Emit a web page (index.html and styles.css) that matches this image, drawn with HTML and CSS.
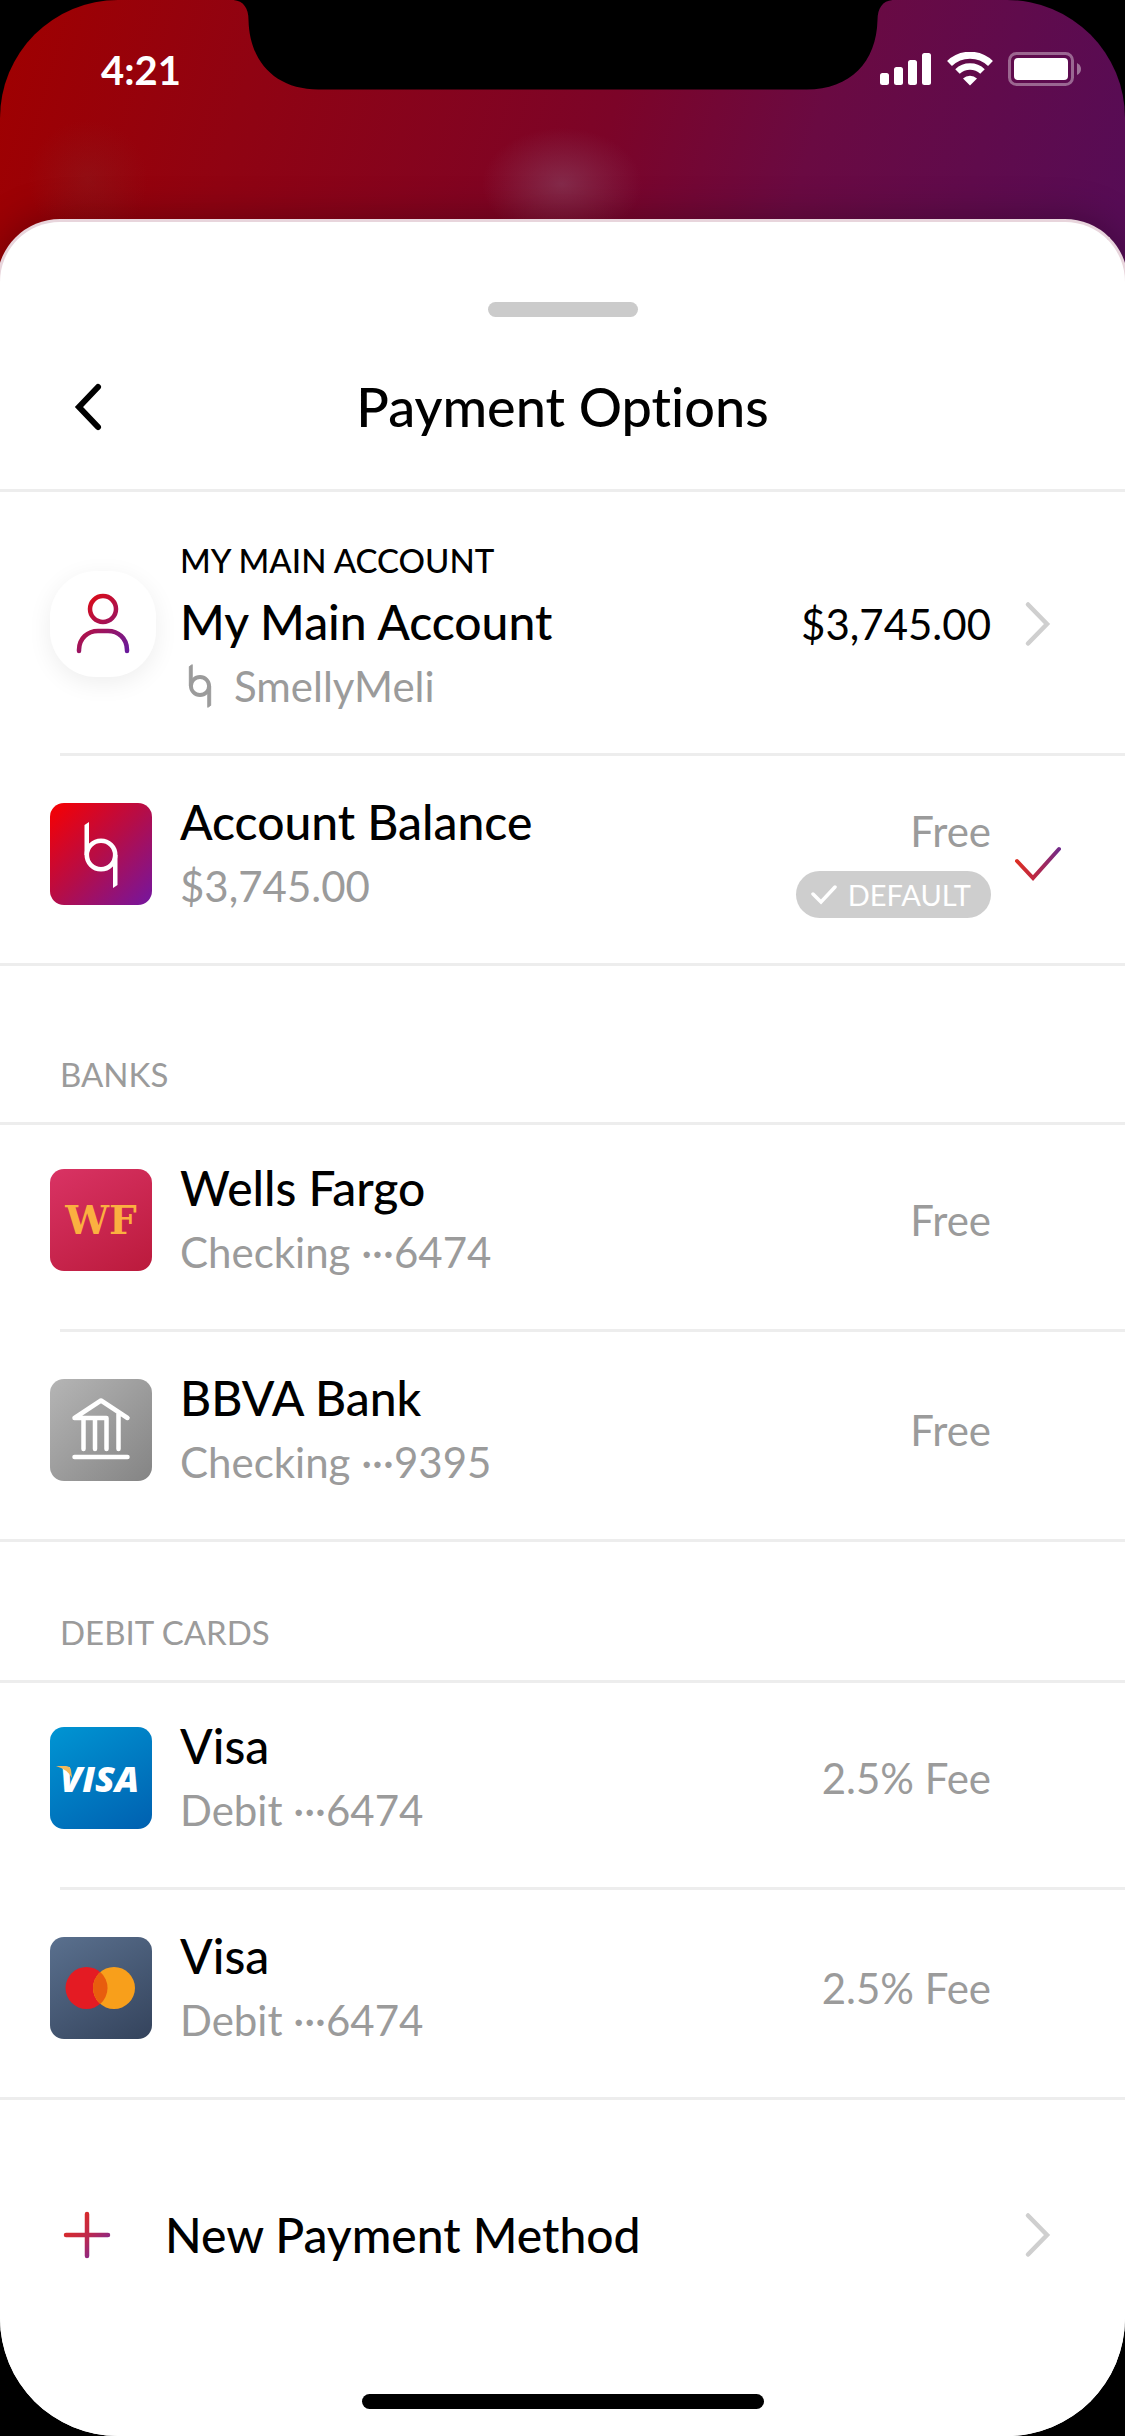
FILE: index.html
```html
<!DOCTYPE html>
<html lang="en">
<head>
<meta charset="utf-8">
<meta name="viewport" content="width=device-width, initial-scale=1">
<title>Payment Options</title>
<link rel="stylesheet" href="styles.css">
</head>
<body>
<svg class="defs" width="0" height="0" aria-hidden="true">
  <defs>
    <linearGradient id="brand" gradientUnits="userSpaceOnUse" x1="8" y1="4" x2="52" y2="60">
      <stop offset="0" stop-color="#e60a0a"/><stop offset="1" stop-color="#6a1a9a"/>
    </linearGradient>
    <linearGradient id="brand-check" gradientUnits="userSpaceOnUse" x1="0" y1="0" x2="48" y2="0">
      <stop offset="0" stop-color="#e03020"/><stop offset=".4" stop-color="#c02840"/><stop offset="1" stop-color="#6a2a90"/>
    </linearGradient>
    <linearGradient id="brand-plus" gradientUnits="userSpaceOnUse" x1="8" y1="8" x2="42" y2="42">
      <stop offset="0" stop-color="#e02c20"/><stop offset=".5" stop-color="#c0284a"/><stop offset="1" stop-color="#7c2898"/>
    </linearGradient>
    <symbol id="chevron" viewBox="0 0 28 48">
      <path d="M4 4.500 L23 24 L4 43.500" fill="none" stroke="#cfcfcf" stroke-width="4.500" stroke-linecap="round"/>
    </symbol>
  </defs>
</svg>
<div class="screen">
  <header class="status">
    <svg class="notch" width="659" height="90" viewBox="0 0 659 90" aria-hidden="true">
      <path d="M0 0 C10 1 15 8 15 20 C16 62 42 89.500 85 89.500 H573 C617 89.500 643 62 644 20 C644 8 649 1 659 0Z" fill="#000"/>
    </svg>
    <time class="clock">4:21</time>
    <div class="indicators">
      <svg width="52" height="34" viewBox="0 0 52 34" aria-label="Signal" fill="#fff">
        <rect x="0" y="21" width="9" height="12" rx="2.500"/><rect x="14" y="15" width="9" height="18" rx="2.500"/>
        <rect x="28" y="8" width="9" height="25" rx="2.500"/><rect x="42" y="1" width="9" height="32" rx="2.500"/>
      </svg>
      <svg width="46" height="34" viewBox="0 0 46 34" aria-label="Wi-Fi" fill="none" stroke="#fff">
        <path d="M2.500 11.500 A29.500 29.500 0 0 1 43.500 11.500" stroke-width="7"/>
        <path d="M10.500 19.500 A18 18 0 0 1 35.500 19.500" stroke-width="6.500"/>
        <path d="M16 26.500 A10 10 0 0 1 30 26.500 L23 33.500Z" fill="#fff" stroke="none"/>
      </svg>
      <svg width="74" height="34" viewBox="0 0 74 34" aria-label="Battery">
        <rect x="1.500" y="1.500" width="63" height="31" rx="7" fill="none" stroke="#fff" stroke-opacity=".38" stroke-width="3"/>
        <rect x="6" y="6" width="54" height="22" rx="4" fill="#fff"/>
        <path d="M69 11 Q73 13 73 17 Q73 21 69 23Z" fill="#fff" fill-opacity=".42"/>
      </svg>
    </div>
  </header>

  <main class="sheet">
    <div class="grabber"></div>
    <div class="titlebar">
      <button class="back" type="button" aria-label="Back">
        <svg width="32" height="50" viewBox="0 0 32 50"><path d="M26 5 L7 25 L26 45" fill="none" stroke="#000" stroke-width="6" stroke-linecap="round"/></svg>
      </button>
      <h1 class="title">Payment Options</h1>
    </div>

    <ul class="list">
      <li class="item">
        <button class="row row-tall" type="button">
          <span class="tile avatar">
            <svg width="60" height="66" viewBox="0 0 60 66" fill="none" stroke="url(#brand)" stroke-width="4.500" stroke-linecap="round">
              <circle cx="30" cy="18" r="13"/><path d="M6 60 V59 C6 47 15 40 25 40 H35 C45 40 54 47 54 59 V60"/>
            </svg>
          </span>
          <span class="text">
            <span class="overline">MY MAIN ACCOUNT</span>
            <span class="name">My Main Account</span>
            <span class="detail handle">
              <svg width="24" height="44" viewBox="33 18 36 68" fill="#9b9b9b" stroke="#9b9b9b" aria-hidden="true">
                <path d="M34.500 22 L39 19 V52 H34.500Z M63 52 H67.500 V82 L63 85Z" stroke-width="1.500"/>
                <circle cx="51" cy="52" r="14" fill="none" stroke-width="6"/>
              </svg>
              SmellyMeli
            </span>
          </span>
          <span class="value strong">$3,745.00</span>
          <span class="accessory"><svg width="28" height="48"><use href="#chevron"/></svg></span>
        </button>
      </li>
      <li class="item">
        <button class="row" type="button" aria-pressed="true">
          <span class="tile balance">
            <svg width="102" height="102" viewBox="0 0 102 102" fill="#fff">
              <path d="M34.500 22 L39 19 V52 H34.500Z M63 52 H67.500 V82 L63 85Z"/>
              <circle cx="51" cy="52" r="14.200" fill="none" stroke="#fff" stroke-width="4.600"/>
            </svg>
          </span>
          <span class="text"><span class="name">Account Balance</span><span class="detail">$3,745.00</span></span>
          <span class="value stacked">
            Free
            <span class="badge">
              <svg width="28" height="20" viewBox="0 0 28 20"><path d="M3 9 L11 17 L25 2" fill="none" stroke="#fff" stroke-width="3.500" stroke-linecap="round"/></svg>
              DEFAULT
            </span>
          </span>
          <span class="accessory selected">
            <svg width="48" height="38" viewBox="0 0 48 38"><path d="M3 16 L19 33 L45 4" fill="none" stroke="url(#brand-check)" stroke-width="4" stroke-linecap="round"/></svg>
          </span>
        </button>
      </li>
    </ul>

    <h2 class="section">BANKS</h2>
    <ul class="list">
      <li class="item">
        <button class="row" type="button">
          <span class="tile wells">WF</span>
          <span class="text"><span class="name">Wells Fargo</span><span class="detail">Checking ···6474</span></span>
          <span class="value">Free</span>
        </button>
      </li>
      <li class="item">
        <button class="row" type="button">
          <span class="tile bank">
            <svg width="102" height="102" viewBox="0 0 102 102" fill="none" stroke="#fff" stroke-width="4.500" stroke-linecap="round" stroke-linejoin="round">
              <path d="M56.500 70 V39 H24.500 L51 21.500 L77.500 39 M33.500 39 V70 M45 39 V70 M68.500 35 V70 M24.500 78 H77.500"/>
            </svg>
          </span>
          <span class="text"><span class="name">BBVA Bank</span><span class="detail">Checking ···9395</span></span>
          <span class="value">Free</span>
        </button>
      </li>
    </ul>

    <h2 class="section section-close">DEBIT CARDS</h2>
    <ul class="list">
      <li class="item">
        <button class="row" type="button">
          <span class="tile visa">
            <svg width="102" height="102" viewBox="0 0 102 102">
              <text class="visa-mark" x="10" y="65">VISA</text>
              <path d="M6 39 H16 Q20.500 39.500 21 43 L22 51 Q17 42 6 39Z" fill="#f3b95a"/>
            </svg>
          </span>
          <span class="text"><span class="name">Visa</span><span class="detail">Debit ···6474</span></span>
          <span class="value">2.5% Fee</span>
        </button>
      </li>
      <li class="item">
        <button class="row" type="button">
          <span class="tile mastercard">
            <svg width="102" height="102" viewBox="0 0 102 102">
              <circle cx="36.500" cy="51" r="21" fill="#e41b23"/><circle cx="64" cy="51" r="21" fill="#f89f1b"/>
              <path d="M50.250 35.100 A21 21 0 0 1 50.250 66.900 A21 21 0 0 1 50.250 35.100Z" fill="#e85d0e"/>
            </svg>
          </span>
          <span class="text"><span class="name">Visa</span><span class="detail">Debit ···6474</span></span>
          <span class="value">2.5% Fee</span>
        </button>
      </li>
    </ul>

    <button class="add" type="button">
      <svg width="50" height="50" viewBox="0 0 50 50"><path d="M25 4 V46 M4 25 H46" stroke="url(#brand-plus)" stroke-width="4.500" stroke-linecap="round" fill="none"/></svg>
      <span class="add-label">New Payment Method</span>
      <span class="accessory"><svg width="28" height="48"><use href="#chevron"/></svg></span>
    </button>
    <div class="home"></div>
  </main>
</div>
</body>
</html>
```
FILE: styles.css
```css
* { box-sizing: border-box; }

body {
  margin: 0;
  background: #000;
  color: #000;
  font-family: Lato, "Liberation Sans", sans-serif;
  font-variant-ligatures: none;
}

button {
  border: 0;
  padding: 0;
  background: none;
  color: inherit;
  font: inherit;
  font-variant-ligatures: none;
  text-align: left;
}

svg { display: block; flex: none; }
.defs { position: absolute; }

.screen {
  display: flex;
  flex-direction: column;
  min-height: 100vh;
  border-radius: 118px;
  overflow: hidden;
  background:
    radial-gradient(ellipse 60px 60px at 88px 180px, rgba(130, 50, 50, .25), transparent),
    radial-gradient(ellipse 80px 56px at 562px 184px, rgba(140, 80, 110, .5), transparent),
    linear-gradient(106deg, #a00000 0, #900312 260px, #7c0428 620px, #6a0a42 820px, #560c56 1150px) 0 0 / 100% 340px no-repeat,
    #fff;
}

.status {
  position: relative;
  display: flex;
  justify-content: space-between;
  align-items: flex-start;
  height: 219px;
  padding: 52px 43px 0 101px;
}

.notch {
  position: absolute;
  top: 0;
  left: 50%;
  transform: translateX(-50%);
}

.clock {
  color: #fff;
  font-size: 40px;
  line-height: 36px;
  font-weight: 700;
}

.indicators { display: flex; gap: 15px; }

.sheet {
  flex: 1;
  margin: 0 -3px;
  padding-top: 80px;
  border: 3px solid #e8d5dc;
  border-bottom: 0;
  border-radius: 63px 63px 0 0;
  background: #fff;
  box-shadow: 0 0 40px rgba(0, 0, 0, .3);
}

.grabber {
  width: 150px;
  height: 15px;
  margin: 0 auto;
  border-radius: 8px;
  background: #cbcbcb;
}

.titlebar {
  display: grid;
  grid-template-columns: 1fr auto 1fr;
  align-items: center;
  padding: 58px 72px 50px;
  border-bottom: 3px solid #ededed;
  margin-bottom: -3px;
}

.title {
  margin: 0;
  font-size: 54px;
  line-height: 64px;
  font-weight: 500;
}

.list { list-style: none; margin: 0; padding: 0; }

/* Separator between rows is inset; the last one spans the sheet. */
.item::after {
  content: "";
  display: block;
  height: 3px;
  margin-left: 60px;
  background: #ededed;
}
.item:last-child::after { margin-left: 0; }

.row {
  display: grid;
  grid-template-columns: 102px 1fr auto 94px;
  align-items: center;
  width: 100%;
  padding: 34px 40px 45px 50px;
}
.row-tall { padding-top: 41px; padding-bottom: 35px; }

.tile {
  display: flex;
  align-items: center;
  justify-content: center;
  width: 102px;
  height: 102px;
  border-radius: 14px;
}

.avatar {
  width: 106px;
  height: 106px;
  border-radius: 46px;
  background: #fff;
  box-shadow: 0 6px 24px rgba(0, 0, 0, .07);
}
.balance { background: linear-gradient(135deg, #f80000, #b50d48 50%, #7416a0); }
.wells {
  background: linear-gradient(150deg, #d93364, #bb1a3c);
  color: #fbb040;
  font-family: "DejaVu Serif", serif;
  font-weight: 700;
  font-size: 39px;
}
.bank { background: linear-gradient(135deg, #b5b5b5, #848484); }
.visa { background: linear-gradient(150deg, #0095d3, #0060b0); }
.mastercard { background: linear-gradient(150deg, #5a708e, #34435c); }

.visa-mark {
  fill: #fff;
  font-family: "Open Sans", sans-serif;
  font-size: 36px;
  font-weight: 800;
  font-style: italic;
}

.text { display: flex; flex-direction: column; padding-left: 28px; }
.overline { font-size: 33px; line-height: 60px; font-weight: 500; }
.name { font-size: 48px; line-height: 64px; font-weight: 500; }
.detail { font-size: 42px; line-height: 64px; color: #9b9b9b; }
.handle { display: flex; align-items: center; gap: 22px; padding-left: 8px; }

.value { font-size: 42px; line-height: 64px; color: #9b9b9b; text-align: right; }
.strong { color: #000; }
.stacked { display: flex; flex-direction: column; align-items: flex-end; gap: 8px; align-self: end; }

.badge {
  display: flex;
  align-items: center;
  gap: 10px;
  height: 47px;
  padding: 0 20px 0 14px;
  border-radius: 24px;
  background: #cecece;
  color: #fff;
  font-size: 29px;
  line-height: 47px;
}

.accessory { display: flex; align-items: center; justify-content: center; width: 94px; }
.selected { align-self: end; height: 108px; }

.section {
  margin: 0 0 -3px;
  padding: 88px 60px 28px;
  border-bottom: 3px solid #ededed;
  color: #9b9b9b;
  font-size: 33px;
  line-height: 40px;
  font-weight: 400;
}
.section-close { padding-top: 70px; }

.add {
  display: flex;
  align-items: center;
  width: 100%;
  padding: 103px 40px 127px 62px;
}
.add-label { flex: 1; padding-left: 53px; font-size: 48px; line-height: 64px; font-weight: 500; }

.home {
  width: 402px;
  height: 15px;
  margin: 0 auto 27px;
  border-radius: 8px;
  background: #000;
}
```
